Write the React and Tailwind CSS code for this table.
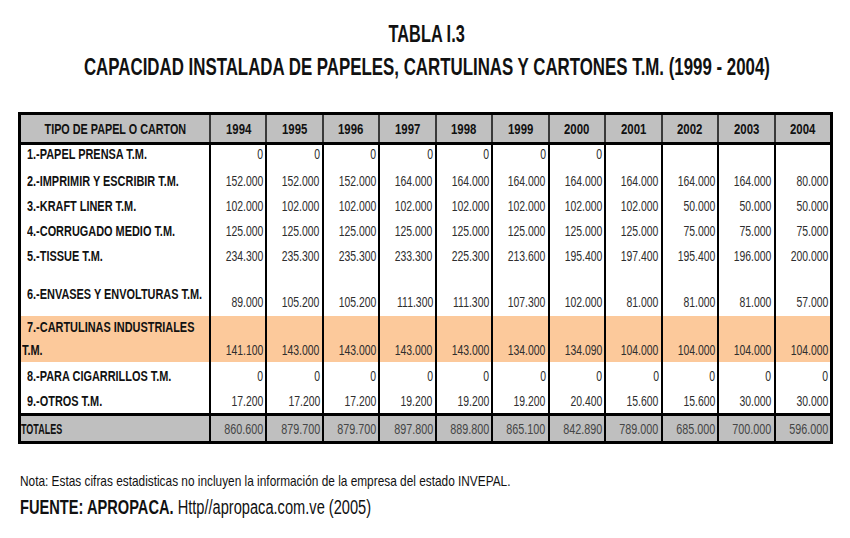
import React from "react";

const YEARS = ["1994","1995","1996","1997","1998","1999","2000","2001","2002","2003","2004"];

const ORIGIN = { right: "origin-right", left: "origin-left", center: "origin-center" };

function N({ children, o = "right", sx = "scale-x-[0.82]", className = "" }) {
  return (
    <span className={"inline-block whitespace-nowrap " + sx + " " + ORIGIN[o] + " " + className}>
      {children}
    </span>
  );
}

const NUM_SX = "scale-x-[0.72]";
const LBL_SX = "scale-x-[0.78]";

const ROWS = [
  { label: "1.-PAPEL PRENSA T.M.", h: "h-[21px]", v: ["0","0","0","0","0","0","0","","","",""] },
  { label: "2.-IMPRIMIR Y ESCRIBIR T.M.", h: "h-[27px]", v: ["152.000","152.000","152.000","164.000","164.000","164.000","164.000","164.000","164.000","164.000","80.000"] },
  { label: "3.-KRAFT LINER T.M.", h: "h-[25px]", v: ["102.000","102.000","102.000","102.000","102.000","102.000","102.000","102.000","50.000","50.000","50.000"] },
  { label: "4.-CORRUGADO MEDIO T.M.", h: "h-[25px]", v: ["125.000","125.000","125.000","125.000","125.000","125.000","125.000","125.000","75.000","75.000","75.000"] },
  { label: "5.-TISSUE T.M.", h: "h-[25px]", v: ["234.300","235.300","235.300","233.300","225.300","213.600","195.400","197.400","195.400","196.000","200.000"] },
  { label: "6.-ENVASES Y ENVOLTURAS T.M.", h: "h-[48px]", kind: "tall", v: ["89.000","105.200","105.200","111.300","111.300","107.300","102.000","81.000","81.000","81.000","57.000"] },
  { label: "7", h: "h-[46px]", kind: "orange", v: ["141.100","143.000","143.000","143.000","143.000","134.000","134.090","104.000","104.000","104.000","104.000"] },
  { label: "8.-PARA CIGARRILLOS T.M.", h: "h-[26px]", v: ["0","0","0","0","0","0","0","0","0","0","0"] },
  { label: "9.-OTROS T.M.", h: "h-[25px]", v: ["17.200","17.200","17.200","19.200","19.200","19.200","20.400","15.600","15.600","30.000","30.000"] },
];

const TOTALS = ["860.600","879.700","879.700","897.800","889.800","865.100","842.890","789.000","685.000","700.000","596.000"];

const GRID = "grid grid-cols-[188px_repeat(11,minmax(0,1fr))]";

function DataRow({ row }) {
  const orange = row.kind === "orange";
  const tall = row.kind === "tall";
  return (
    <div className={GRID + " " + row.h + (orange ? " bg-[#fcc99b]" : " bg-white")}>
      {orange ? (
        <div className="flex flex-col text-[14px] font-bold leading-[23px] text-[#111] pl-[1px]">
          <div className="pl-[5px]"><N o="left" sx={LBL_SX}>7.-CARTULINAS INDUSTRIALES</N></div>
          <div><N o="left" sx={LBL_SX}>T.M.</N></div>
        </div>
      ) : (
        <div className={"flex pl-[6px] text-[14px] font-bold leading-[16px] text-[#111] " + (tall ? "items-center pt-[3px]" : "items-end pb-[4px]")}>
          <N o="left" sx={LBL_SX}>{row.label}</N>
        </div>
      )}
      {row.v.map((val, i) => (
        <div
          key={i}
          className={"flex items-end justify-end border-l-2 border-black pr-[2px] text-[14.5px] leading-[16px] text-[#2e2e2e] " + (tall ? "pb-[6px]" : "pb-[4px]")}
        >
          <N sx={NUM_SX}>{val}</N>
        </div>
      ))}
    </div>
  );
}

export default function App() {
  return (
    <div className="w-[850px] h-[538px] bg-white font-['Liberation_Sans',Arial,sans-serif] text-black overflow-hidden">
      <div className="pt-[18px] flex flex-col items-center text-[23px] font-bold leading-[33px] pl-[3px] text-[#111]">
        <N o="center" sx="scale-x-[0.71]">TABLA I.3</N>
        <N o="center" sx="scale-x-[0.733]">CAPACIDAD INSTALADA DE PAPELES, CARTULINAS Y CARTONES T.M. (1999 - 2004)</N>
      </div>

      <div className="mt-[28px] ml-[18px] w-[815px] border-[3px] border-black">
        <div className={GRID + " h-[30px] bg-[#c0c0c0] border-b-[3px] border-black text-[15px] font-bold leading-[16px] text-[#111]"}>
          <div className="flex items-center justify-center">
            <N o="center" sx="scale-x-[0.72]">TIPO DE PAPEL O CARTON</N>
          </div>
          {YEARS.map((y) => (
            <div key={y} className="flex items-center justify-center border-l-2 border-[#3a3a3a]">
              <N o="center" sx="scale-x-[0.76]">{y}</N>
            </div>
          ))}
        </div>

        {ROWS.map((r, i) => (
          <DataRow key={i} row={r} />
        ))}

        <div className={GRID + " h-[28px] bg-[#bfbfbf] border-t-[3px] border-black"}>
          <div className="flex items-center text-[15px] font-bold leading-[16px] text-[#111]">
            <N o="left" sx="scale-x-[0.6]">TOTALES</N>
          </div>
          {TOTALS.map((val, i) => (
            <div key={i} className="flex items-center justify-end border-l-2 border-black pr-[2px] text-[15px] leading-[16px] text-[#454545]">
              <N sx="scale-x-[0.72]">{val}</N>
            </div>
          ))}
        </div>
      </div>

      <div className="mt-[27px] pl-[20px]">
        <div className="text-[15px] leading-[20px] text-[#111]">
          <N o="left" sx="scale-x-[0.79]">Nota: Estas cifras estadisticas no incluyen la información de la empresa del estado INVEPAL.</N>
        </div>
        <div className="mt-[4px] text-[19.5px] leading-[24px] text-[#111]">
          <N o="left" sx="scale-x-[0.75]"><span className="font-bold">FUENTE: APROPACA.</span> Http//apropaca.com.ve (2005)</N>
        </div>
      </div>
    </div>
  );
}
